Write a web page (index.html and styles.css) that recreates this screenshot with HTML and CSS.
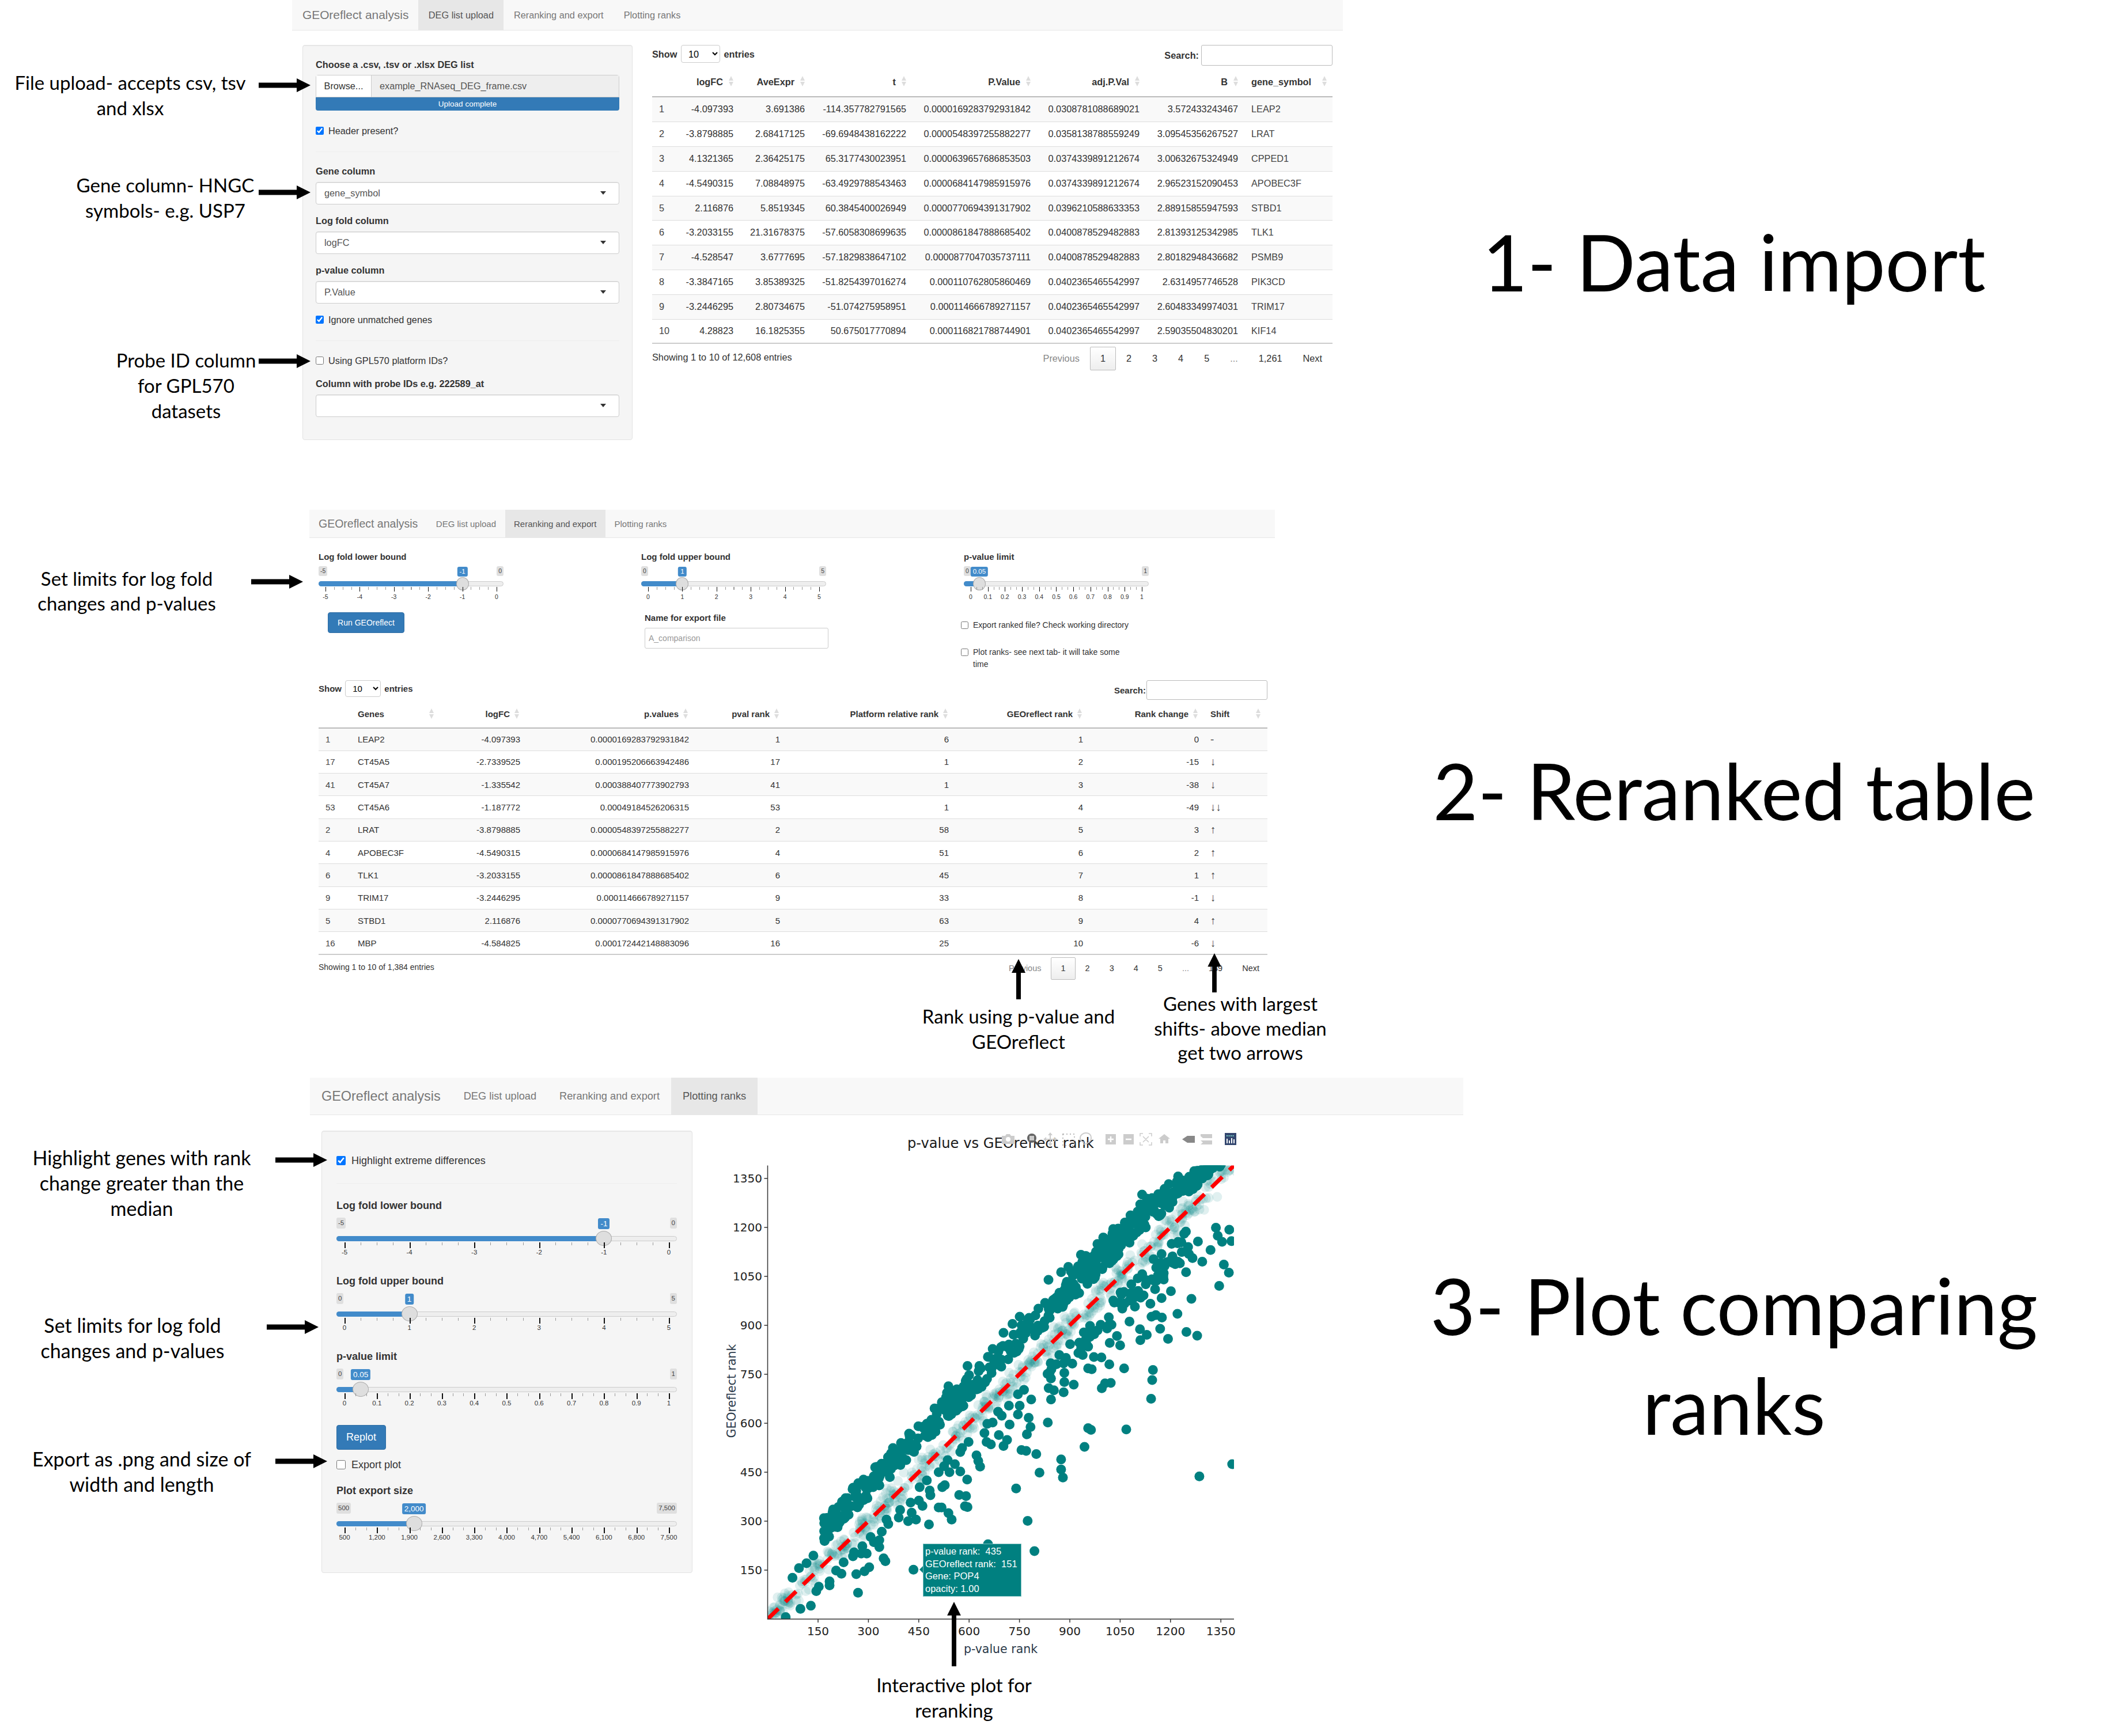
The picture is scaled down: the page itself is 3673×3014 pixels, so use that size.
FILE: index.html
```html
<!DOCTYPE html>
<html lang="en">
<head>
    <meta charset="UTF-8">
    <title>GEOreflect workflow figure</title>
    <link rel="stylesheet" href="styles.css">
</head>
<body>
    <!-- 1: data import -->
    <section class="shot shot-1">
        <nav class="navbar">
            <span class="brand">GEOreflect analysis</span>
            <span class="tab active">DEG list upload</span>
            <span class="tab">Reranking and export</span>
            <span class="tab">Plotting ranks</span>
        </nav>
        <div class="shot-body">
            <aside class="well">
                <div class="field-label">Choose a .csv, .tsv or .xlsx DEG list</div>
                <div class="file-input"><span class="browse">Browse...</span><span class="file-name">example_RNAseq_DEG_frame.csv</span></div>
                <div class="progress">Upload complete</div>
                <label class="check check-first"><input type="checkbox" checked> Header present?</label>
                <hr>
                <div class="field-label">Gene column</div>
                <div class="sel">gene_symbol</div>
                <div class="field-label next">Log fold column</div>
                <div class="sel">logFC</div>
                <div class="field-label next">p-value column</div>
                <div class="sel">P.Value</div>
                <label class="check next"><input type="checkbox" checked> Ignore unmatched genes</label>
                <hr>
                <label class="check"><input type="checkbox"> Using GPL570 platform IDs?</label>
                <div class="field-label next">Column with probe IDs e.g. 222589_at</div>
                <div class="sel"></div>
            </aside>
            <main class="dt-wrap">
                <div class="dt-top">
                    <span class="dt-show">Show <select><option>10</option></select> entries</span>
                    <span class="dt-search">Search: <input type="text"></span>
                </div>
                <table class="dt dt-a">
                    <thead>
                        <tr>
                            <th></th>
                            <th class="num sort">logFC</th>
                            <th class="num sort">AveExpr</th>
                            <th class="num sort">t</th>
                            <th class="num sort">P.Value</th>
                            <th class="num sort">adj.P.Val</th>
                            <th class="num sort">B</th>
                            <th class="sort">gene_symbol</th>
                        </tr>
                    </thead>
                    <tbody>
                        <tr><td>1</td><td class="num">-4.097393</td><td class="num">3.691386</td><td class="num">-114.357782791565</td><td class="num">0.0000169283792931842</td><td class="num">0.0308781088689021</td><td class="num">3.572433243467</td><td>LEAP2</td></tr>
                        <tr><td>2</td><td class="num">-3.8798885</td><td class="num">2.68417125</td><td class="num">-69.6948438162222</td><td class="num">0.0000548397255882277</td><td class="num">0.0358138788559249</td><td class="num">3.09545356267527</td><td>LRAT</td></tr>
                        <tr><td>3</td><td class="num">4.1321365</td><td class="num">2.36425175</td><td class="num">65.3177430023951</td><td class="num">0.0000639657686853503</td><td class="num">0.0374339891212674</td><td class="num">3.00632675324949</td><td>CPPED1</td></tr>
                        <tr><td>4</td><td class="num">-4.5490315</td><td class="num">7.08848975</td><td class="num">-63.4929788543463</td><td class="num">0.0000684147985915976</td><td class="num">0.0374339891212674</td><td class="num">2.96523152090453</td><td>APOBEC3F</td></tr>
                        <tr><td>5</td><td class="num">2.116876</td><td class="num">5.8519345</td><td class="num">60.3845400026949</td><td class="num">0.0000770694391317902</td><td class="num">0.0396210588633353</td><td class="num">2.88915855947593</td><td>STBD1</td></tr>
                        <tr><td>6</td><td class="num">-3.2033155</td><td class="num">21.31678375</td><td class="num">-57.6058308699635</td><td class="num">0.0000861847888685402</td><td class="num">0.0400878529482883</td><td class="num">2.81393125342985</td><td>TLK1</td></tr>
                        <tr><td>7</td><td class="num">-4.528547</td><td class="num">3.6777695</td><td class="num">-57.1829838647102</td><td class="num">0.0000877047035737111</td><td class="num">0.0400878529482883</td><td class="num">2.80182948436682</td><td>PSMB9</td></tr>
                        <tr><td>8</td><td class="num">-3.3847165</td><td class="num">3.85389325</td><td class="num">-51.8254397016274</td><td class="num">0.000110762805860469</td><td class="num">0.0402365465542997</td><td class="num">2.6314957746528</td><td>PIK3CD</td></tr>
                        <tr><td>9</td><td class="num">-3.2446295</td><td class="num">2.80734675</td><td class="num">-51.074275958951</td><td class="num">0.000114666789271157</td><td class="num">0.0402365465542997</td><td class="num">2.60483349974031</td><td>TRIM17</td></tr>
                        <tr><td>10</td><td class="num">4.28823</td><td class="num">16.1825355</td><td class="num">50.675017770894</td><td class="num">0.000116821788744901</td><td class="num">0.0402365465542997</td><td class="num">2.59035504830201</td><td>KIF14</td></tr>
                    </tbody>
                </table>
                <div class="dt-foot">
                    <span class="dt-info">Showing 1 to 10 of 12,608 entries</span>
                    <div class="pager">
                        <span class="page muted">Previous</span><span class="page current">1</span><span class="page">2</span><span class="page">3</span><span class="page">4</span><span class="page">5</span><span class="page muted">...</span><span class="page">1,261</span><span class="page">Next</span>
                    </div>
                </div>
            </main>
        </div>
    </section>

    <!-- 2: reranked table -->
    <section class="shot shot-2">
        <nav class="navbar">
            <span class="brand">GEOreflect analysis</span>
            <span class="tab">DEG list upload</span>
            <span class="tab active">Reranking and export</span>
            <span class="tab">Plotting ranks</span>
        </nav>
        <div class="shot-body">
            <div class="controls">
                <div class="slider">
                    <div class="field-label">Log fold lower bound</div>
                    <div class="irs" style="--f:0.8">
                        <span class="irs-min">-5</span><span class="irs-max">0</span><span class="irs-val">-1</span>
                        <div class="irs-line"><div class="irs-bar"></div></div>
                        <span class="irs-handle"></span>
                        <div class="irs-grid subs-20"><span class="tick"><b>-5</b></span><span class="tick"><b>-4</b></span><span class="tick"><b>-3</b></span><span class="tick"><b>-2</b></span><span class="tick"><b>-1</b></span><span class="tick"><b>0</b></span></div>
                    </div>
                </div>
                <div class="slider">
                    <div class="field-label">Log fold upper bound</div>
                    <div class="irs" style="--f:0.2">
                        <span class="irs-min">0</span><span class="irs-max">5</span><span class="irs-val">1</span>
                        <div class="irs-line"><div class="irs-bar"></div></div>
                        <span class="irs-handle"></span>
                        <div class="irs-grid subs-20"><span class="tick"><b>0</b></span><span class="tick"><b>1</b></span><span class="tick"><b>2</b></span><span class="tick"><b>3</b></span><span class="tick"><b>4</b></span><span class="tick"><b>5</b></span></div>
                    </div>
                </div>
                <div class="slider">
                    <div class="field-label">p-value limit</div>
                    <div class="irs" style="--f:0.05">
                        <span class="irs-min">0</span><span class="irs-max">1</span><span class="irs-val">0.05</span>
                        <div class="irs-line"><div class="irs-bar"></div></div>
                        <span class="irs-handle"></span>
                        <div class="irs-grid subs-30"><span class="tick"><b>0</b></span><span class="tick"><b>0.1</b></span><span class="tick"><b>0.2</b></span><span class="tick"><b>0.3</b></span><span class="tick"><b>0.4</b></span><span class="tick"><b>0.5</b></span><span class="tick"><b>0.6</b></span><span class="tick"><b>0.7</b></span><span class="tick"><b>0.8</b></span><span class="tick"><b>0.9</b></span><span class="tick"><b>1</b></span></div>
                    </div>
                </div>
                <div class="run-cell"><button class="btn">Run GEOreflect</button></div>
                <div class="name-cell">
                    <div class="field-label">Name for export file</div>
                    <input class="text-input" type="text" placeholder="A_comparison">
                </div>
                <div class="check-cell">
                    <label class="check"><input type="checkbox"> <span>Export ranked file? Check working directory</span></label>
                    <label class="check"><input type="checkbox"> <span>Plot ranks- see next tab- it will take some time</span></label>
                </div>
            </div>
            <div class="dt-wrap">
                <div class="dt-top">
                    <span class="dt-show">Show <select><option>10</option></select> entries</span>
                    <span class="dt-search">Search: <input type="text"></span>
                </div>
                <table class="dt dt-b">
                    <thead>
                        <tr>
                            <th></th>
                            <th class="sort">Genes</th>
                            <th class="num sort">logFC</th>
                            <th class="num sort">p.values</th>
                            <th class="num sort">pval rank</th>
                            <th class="num sort">Platform relative rank</th>
                            <th class="num sort">GEOreflect rank</th>
                            <th class="num sort">Rank change</th>
                            <th class="sort">Shift</th>
                        </tr>
                    </thead>
                    <tbody>
                        <tr><td>1</td><td>LEAP2</td><td class="num">-4.097393</td><td class="num">0.0000169283792931842</td><td class="num">1</td><td class="num">6</td><td class="num">1</td><td class="num">0</td><td>-</td></tr>
                        <tr><td>17</td><td>CT45A5</td><td class="num">-2.7339525</td><td class="num">0.000195206663942486</td><td class="num">17</td><td class="num">1</td><td class="num">2</td><td class="num">-15</td><td>↓</td></tr>
                        <tr><td>41</td><td>CT45A7</td><td class="num">-1.335542</td><td class="num">0.000388407773902793</td><td class="num">41</td><td class="num">1</td><td class="num">3</td><td class="num">-38</td><td>↓</td></tr>
                        <tr><td>53</td><td>CT45A6</td><td class="num">-1.187772</td><td class="num">0.00049184526206315</td><td class="num">53</td><td class="num">1</td><td class="num">4</td><td class="num">-49</td><td>↓↓</td></tr>
                        <tr><td>2</td><td>LRAT</td><td class="num">-3.8798885</td><td class="num">0.0000548397255882277</td><td class="num">2</td><td class="num">58</td><td class="num">5</td><td class="num">3</td><td>↑</td></tr>
                        <tr><td>4</td><td>APOBEC3F</td><td class="num">-4.5490315</td><td class="num">0.0000684147985915976</td><td class="num">4</td><td class="num">51</td><td class="num">6</td><td class="num">2</td><td>↑</td></tr>
                        <tr><td>6</td><td>TLK1</td><td class="num">-3.2033155</td><td class="num">0.0000861847888685402</td><td class="num">6</td><td class="num">45</td><td class="num">7</td><td class="num">1</td><td>↑</td></tr>
                        <tr><td>9</td><td>TRIM17</td><td class="num">-3.2446295</td><td class="num">0.000114666789271157</td><td class="num">9</td><td class="num">33</td><td class="num">8</td><td class="num">-1</td><td>↓</td></tr>
                        <tr><td>5</td><td>STBD1</td><td class="num">2.116876</td><td class="num">0.0000770694391317902</td><td class="num">5</td><td class="num">63</td><td class="num">9</td><td class="num">4</td><td>↑</td></tr>
                        <tr><td>16</td><td>MBP</td><td class="num">-4.584825</td><td class="num">0.000172442148883096</td><td class="num">16</td><td class="num">25</td><td class="num">10</td><td class="num">-6</td><td>↓</td></tr>
                    </tbody>
                </table>
                <div class="dt-foot">
                    <span class="dt-info">Showing 1 to 10 of 1,384 entries</span>
                    <div class="pager">
                        <span class="page muted">Previous</span><span class="page current">1</span><span class="page">2</span><span class="page">3</span><span class="page">4</span><span class="page">5</span><span class="page muted">...</span><span class="page">139</span><span class="page">Next</span>
                    </div>
                </div>
            </div>
        </div>
    </section>

    <!-- 3: rank plot -->
    <section class="shot shot-3">
        <nav class="navbar">
            <span class="brand">GEOreflect analysis</span>
            <span class="tab">DEG list upload</span>
            <span class="tab">Reranking and export</span>
            <span class="tab active">Plotting ranks</span>
        </nav>
        <div class="shot-body">
            <aside class="well">
                <label class="check"><input type="checkbox" checked> Highlight extreme differences</label>
                <hr>
                <div class="slider">
                    <div class="field-label">Log fold lower bound</div>
                    <div class="irs" style="--f:0.8">
                        <span class="irs-min">-5</span><span class="irs-max">0</span><span class="irs-val">-1</span>
                        <div class="irs-line"><div class="irs-bar"></div></div>
                        <span class="irs-handle"></span>
                        <div class="irs-grid subs-20"><span class="tick"><b>-5</b></span><span class="tick"><b>-4</b></span><span class="tick"><b>-3</b></span><span class="tick"><b>-2</b></span><span class="tick"><b>-1</b></span><span class="tick"><b>0</b></span></div>
                    </div>
                </div>
                <div class="slider">
                    <div class="field-label">Log fold upper bound</div>
                    <div class="irs" style="--f:0.2">
                        <span class="irs-min">0</span><span class="irs-max">5</span><span class="irs-val">1</span>
                        <div class="irs-line"><div class="irs-bar"></div></div>
                        <span class="irs-handle"></span>
                        <div class="irs-grid subs-20"><span class="tick"><b>0</b></span><span class="tick"><b>1</b></span><span class="tick"><b>2</b></span><span class="tick"><b>3</b></span><span class="tick"><b>4</b></span><span class="tick"><b>5</b></span></div>
                    </div>
                </div>
                <div class="slider">
                    <div class="field-label">p-value limit</div>
                    <div class="irs" style="--f:0.05">
                        <span class="irs-min">0</span><span class="irs-max">1</span><span class="irs-val">0.05</span>
                        <div class="irs-line"><div class="irs-bar"></div></div>
                        <span class="irs-handle"></span>
                        <div class="irs-grid subs-30"><span class="tick"><b>0</b></span><span class="tick"><b>0.1</b></span><span class="tick"><b>0.2</b></span><span class="tick"><b>0.3</b></span><span class="tick"><b>0.4</b></span><span class="tick"><b>0.5</b></span><span class="tick"><b>0.6</b></span><span class="tick"><b>0.7</b></span><span class="tick"><b>0.8</b></span><span class="tick"><b>0.9</b></span><span class="tick"><b>1</b></span></div>
                    </div>
                </div>
                <button class="btn">Replot</button>
                <label class="check export-check"><input type="checkbox"> Export plot</label>
                <div class="slider size-slider">
                    <div class="field-label">Plot export size</div>
                    <div class="irs" style="--f:0.2143">
                        <span class="irs-min">500</span><span class="irs-max">7,500</span><span class="irs-val">2,000</span>
                        <div class="irs-line"><div class="irs-bar"></div></div>
                        <span class="irs-handle"></span>
                        <div class="irs-grid subs-30"><span class="tick"><b>500</b></span><span class="tick"><b>1,200</b></span><span class="tick"><b>1,900</b></span><span class="tick"><b>2,600</b></span><span class="tick"><b>3,300</b></span><span class="tick"><b>4,000</b></span><span class="tick"><b>4,700</b></span><span class="tick"><b>5,400</b></span><span class="tick"><b>6,100</b></span><span class="tick"><b>6,800</b></span><span class="tick"><b>7,500</b></span></div>
                    </div>
                </div>
            </aside>
            <div class="plot">
                <svg class="plot-svg" width="980" height="960" viewBox="0 0 980 960">
                    <defs><clipPath id="plot-area"><rect x="112.5" y="73.500" width="809.500" height="787.500"></rect></clipPath></defs>
                    <g clip-path="url(#plot-area)">
                        <g id="dots-light" fill="#008080" fill-opacity="0.12"></g>
                        <g id="dots-dark" fill="#008080"></g>
                        <path d="M112.5 861L922 73.500" stroke="#ff0000" stroke-width="7" stroke-dasharray="26 17" fill="none"></path>
                    </g>
                    <path d="M112.5 73.500V861H922" stroke="#333" stroke-width="1.5" fill="none"></path>
                    <path id="axis-ticks" stroke="#333" stroke-width="1.5" fill="none"></path>
                    <g class="x-ticks" id="x-ticks"></g>
                    <g class="y-ticks" id="y-ticks"></g>
                    <text class="plot-title" x="355" y="43">p-value vs GEOreflect rank</text>
                    <text class="axis-title" x="517" y="920" text-anchor="middle">p-value rank</text>
                    <text class="axis-title" transform="translate(57 465) rotate(-90)" text-anchor="middle">GEOreflect rank</text>
                    <!-- modebar -->
                    <g class="modebar">
                        <g transform="translate(530 28)" fill="#ccc"><path d="M-11-6h6l2-3h6l2 3h6v14h-22z"/><circle r="4" fill="#fff"/></g>
                        <g transform="translate(572 28)"><circle cx="-1" cy="-2" r="8" fill="#666"/><rect x="-5" y="-6" width="8" height="8" fill="#ccc"/><path d="M4 4l7 6" stroke="#444" stroke-width="3.5"/></g>
                        <g transform="translate(603 28)" fill="#ccc"><path d="M-1-10h2v20h-2zM-10-1h20v2h-20z"/><path d="M0-12l4 5h-8zM0 12l4-5h-8zM-12 0l5-4v8zM12 0l-5-4v8z"/></g>
                        <rect x="625" y="19" width="20" height="20" fill="none" stroke="#bbb" stroke-width="2" stroke-dasharray="2 4"/>
                        <path d="M660 36c6 1 14-3 14-10s-5-9-9-9-10 3-10 9c0 4 3 7 7 7" fill="none" stroke="#ccc" stroke-width="2"/>
                        <g transform="translate(708 28)"><rect x="-9" y="-9" width="18" height="18" fill="#ccc"/><path d="M-5 0h10M0-5v10" stroke="#fff" stroke-width="2.5"/></g>
                        <g transform="translate(739 28)"><rect x="-9" y="-9" width="18" height="18" fill="#ccc"/><path d="M-5 0h10" stroke="#fff" stroke-width="2.5"/></g>
                        <g transform="translate(769 28)" fill="none" stroke="#ccc" stroke-width="1.5"><path d="M-10-5v-5h5M5-10h5v5M10 5v5h-5M-5 10h-5v-5M-5-5l10 10M5-5l-10 10"/></g>
                        <path d="M801 19l-10 8h3v8h5v-5h4v5h5v-8h3z" fill="#ccc"/>
                        <path d="M832 28l9-6h13v12h-13z" fill="#888"/>
                        <path d="M864 19h20v7h-16l-4-3.500zM864 30h20v7h-20l4-3.500z" fill="#ccc"/>
                        <g transform="translate(916 28)"><rect x="-10" y="-11" width="20" height="21" fill="#33476f"/><path d="M-7-6h14" stroke="#7fd8c9" stroke-width="2" stroke-dasharray="2 1.500"/><path d="M-6 7V-1M-2 7V2M2 7V-2M6 7V0" stroke="#fff" stroke-width="2"/></g>
                    </g>
                </svg>
                <div class="hover-box">p-value rank:&nbsp; 435<br>GEOreflect rank:&nbsp; 151<br>Gene: POP4<br>opacity: 1.00</div>
            </div>
        </div>
    </section>

    <!-- annotations on top of the screenshots -->
    <p class="note note-upload">File upload- accepts csv, tsv<br>and xlsx</p>
    <p class="note note-gene">Gene column- HNGC<br>symbols- e.g. USP7</p>
    <p class="note note-probe">Probe ID column<br>for GPL570<br>datasets</p>
    <p class="note note-limits-a">Set limits for log fold<br>changes and p-values</p>
    <p class="note note-rank">Rank using p-value and<br>GEOreflect</p>
    <p class="note note-shifts">Genes with largest<br>shifts- above median<br>get two arrows</p>
    <p class="note note-highlight">Highlight genes with rank<br>change greater than the<br>median</p>
    <p class="note note-limits-b">Set limits for log fold<br>changes and p-values</p>
    <p class="note note-export">Export as .png and size of<br>width and length</p>
    <p class="note note-plot">Interactive plot for<br>reranking</p>

    <svg class="arrow arrow-upload" viewBox="0 0 90 24"><path d="M0 7.500H66V0L90 12 66 24V16.500H0Z"/></svg>
    <svg class="arrow arrow-gene" viewBox="0 0 90 24"><path d="M0 7.500H66V0L90 12 66 24V16.500H0Z"/></svg>
    <svg class="arrow arrow-probe" viewBox="0 0 90 24"><path d="M0 7.500H66V0L90 12 66 24V16.500H0Z"/></svg>
    <svg class="arrow arrow-limits-a" viewBox="0 0 90 24"><path d="M0 7.500H66V0L90 12 66 24V16.500H0Z"/></svg>
    <svg class="arrow arrow-highlight" viewBox="0 0 90 24"><path d="M0 7.500H66V0L90 12 66 24V16.500H0Z"/></svg>
    <svg class="arrow arrow-limits-b" viewBox="0 0 90 24"><path d="M0 7.500H66V0L90 12 66 24V16.500H0Z"/></svg>
    <svg class="arrow arrow-export" viewBox="0 0 90 24"><path d="M0 7.500H66V0L90 12 66 24V16.500H0Z"/></svg>
    <svg class="arrow arrow-rank" viewBox="0 0 24 70"><path d="M8 70V24H0L12 0 24 24H16V70Z"/></svg>
    <svg class="arrow arrow-shift" viewBox="0 0 24 70"><path d="M8 70V24H0L12 0 24 24H16V70Z"/></svg>
    <svg class="arrow arrow-plot" viewBox="0 0 24 113"><path d="M8 113V24H0L12 0 24 24H16V113Z"/></svg>

    <h2 class="step step-1">1- Data import</h2>
    <h2 class="step step-2">2- Reranked table</h2>
    <h2 class="step step-3">3- Plot comparing<br>ranks</h2>

    <script src="plot.js"></script>
</body>
</html>
```

FILE: styles.css
```css
body {
    margin: 0;
    width: 3673px;
    height: 3014px;
    position: relative;
    overflow: hidden;
    background: #fff;
    color: #333;
    font-family: "Liberation Sans", Arial, sans-serif;
}

/* the three app screenshots sit on the figure like windows */
.shot {
    position: absolute;
    box-sizing: border-box;
}
.shot-1 {
    left: 507px;
    top: 0;
    width: 1824px;
    font-size: 16.3px;
    --nav-h: 53px;
    --tab-pad: 17.5px;
}
.shot-2 {
    left: 537px;
    top: 885px;
    width: 1676px;
    font-size: 15px;
    --nav-h: 49px;
    --tab-pad: 15.500px;
}
.shot-3 {
    left: 538px;
    top: 1871px;
    width: 2002px;
    font-size: 18px;
    --nav-h: 65px;
    --tab-pad: 20px;
}

.navbar {
    display: flex;
    align-items: stretch;
    height: var(--nav-h);
    box-sizing: border-box;
    background: #f8f8f8;
    border-bottom: 1px solid #e7e7e7;
    color: #777;
}
.brand, .tab {
    display: flex;
    align-items: center;
}
.brand {
    font-size: 1.28em;
}
.tab {
    padding: 0 var(--tab-pad);
}
.tab.active {
    background: #e7e7e7;
    color: #555;
}
.shot-1 .brand { padding: 0 17px 0 18px; }
.shot-2 .brand { padding: 0 16px; font-size: 19.500px; }
.shot-3 .brand { padding: 0 20px; font-size: 23.400px; }
.shot-3 .tab { font-size: 18.200px; }

.well {
    box-sizing: border-box;
    background: #f5f5f5;
    border: 1px solid #e3e3e3;
    border-radius: 4px;
    box-shadow: inset 0 1px 1px rgba(0,0,0,0.05);
}
hr {
    border: 0;
    border-top: 1px solid #eee;
    margin: 0;
}
.field-label {
    font-weight: bold;
    line-height: 20px;
}

/* ---- shot 1 ---- */
.shot-1 .shot-body {
    display: grid;
    grid-template-columns: 573px 1181px;
    column-gap: 34px;
    padding: 25px 0 0 18px;
}
.shot-1 .well {
    height: 686px;
    padding: 23px 22px 0;
}
.shot-1 .well .field-label { margin-bottom: 9px; }
.shot-1 .well .field-label:first-child { margin-bottom: 8px; }
.shot-1 .well .next { margin-top: 18px; }
.shot-1 .well .check + .field-label.next { margin-top: 20px; }
.shot-1 .well hr { margin: 26px 0 23px; }
.shot-1 .well hr + .check { margin-top: 24px; }
.file-input {
    display: flex;
    height: 39px;
    box-sizing: border-box;
    border: 1px solid #ccc;
    border-radius: 4px 4px 0 0;
    line-height: 37px;
}
.browse {
    width: 95px;
    text-align: center;
    background: #fff;
    border-right: 1px solid #ccc;
}
.file-name {
    flex: 1;
    background: #eee;
    color: #555;
    padding-left: 14px;
}
.progress {
    height: 23px;
    line-height: 23px;
    background: #337ab7;
    color: #fff;
    font-size: 13.500px;
    text-align: center;
    border-radius: 0 0 4px 4px;
}
.check {
    display: flex;
    align-items: flex-start;
    gap: 8px;
    line-height: 20px;
}
.check input {
    margin: 3px 0 0;
    width: 14px;
    height: 14px;
    flex: none;
}
.check-first { margin-top: 25px; }
.sel {
    position: relative;
    height: 39px;
    box-sizing: border-box;
    padding-left: 14px;
    line-height: 37px;
    background: #fff;
    border: 1px solid #ccc;
    border-radius: 4px;
    box-shadow: inset 0 1px 1px rgba(0,0,0,0.075);
    color: #555;
}
.sel::after {
    content: "";
    position: absolute;
    right: 22px;
    top: 15px;
    border: 5px solid transparent;
    border-top: 6px solid #333;
    border-bottom: 0;
}

/* ---- data tables ---- */
.dt-top {
    display: flex;
    justify-content: space-between;
    align-items: flex-start;
    font-weight: bold;
}
.dt-show select {
    font: inherit;
    font-weight: normal;
    background: #fff;
    border: 1px solid #ccc;
    border-radius: 4px;
    padding: 0 0 0 8px;
    margin: 0 2px;
}
.dt-search {
    display: flex;
    align-items: center;
    gap: 4px;
}
.dt-search input {
    box-sizing: border-box;
    border: 1px solid #bbb;
    border-radius: 3px;
    background: #fff;
}
.dt {
    border-collapse: collapse;
    table-layout: fixed;
    width: 100%;
}
.dt th {
    position: relative;
    text-align: left;
    padding: 0 10px;
    border-bottom: 2px solid #bbb;
    box-sizing: border-box;
}
.dt th.num {
    text-align: right;
    padding-right: 28px;
}
.dt td {
    padding: 0 10px;
    border-top: 1px solid #ddd;
    box-sizing: border-box;
    white-space: nowrap;
    overflow: hidden;
}
.dt tbody tr:first-child td { border-top: 0; }
.dt tbody tr:nth-child(odd) { background: #f9f9f9; }
.dt tbody tr:last-child td { border-bottom: 2px solid #ccc; }
.dt .num { text-align: right; }
.dt td:first-child { padding-left: 12px; }
.dt td:first-child, .dt td:last-child { color: #444; }
.sort::before, .sort::after {
    content: "";
    position: absolute;
    right: 10px;
    border: 4px solid transparent;
    top: 50%;
}
.sort::before {
    border-bottom: 8px solid #ddd;
    border-top: 0;
    margin-top: -9px;
}
.sort::after {
    border-top: 8px solid #ddd;
    border-bottom: 0;
    margin-top: 1px;
}
.dt-foot {
    display: flex;
    justify-content: space-between;
    align-items: flex-start;
}
.pager {
    display: flex;
    align-items: stretch;
}
.page {
    display: flex;
    align-items: center;
    box-sizing: border-box;
    border: 1px solid transparent;
    border-radius: 2px;
}
.page.muted { color: #888; }
.page.current {
    border-color: #bbb;
    background: linear-gradient(#fff, #eee);
}

.dt-a th:nth-child(1) { width: 40px; }
.dt-a th:nth-child(2) { width: 111px; }
.dt-a th:nth-child(3) { width: 124px; }
.dt-a th:nth-child(4) { width: 176px; }
.dt-a th:nth-child(5) { width: 216px; }
.dt-a th:nth-child(6) { width: 189px; }
.dt-a th:nth-child(7) { width: 171px; }
.dt-a th { height: 54px; padding-top: 4px; }
.dt-a td { height: 43px; }
.dt-a tbody tr:nth-child(5n) td { height: 42px; }
.dt-a td:last-child, .dt-a th:last-child { padding-left: 13px; }

.shot-1 .dt-top { height: 36px; }
.shot-1 .dt-show { padding-top: 6px; }
.shot-1 .dt-show select { height: 31px; width: 68px; margin-top: -6px; }
.shot-1 .dt-search input { width: 228px; height: 36px; }
.shot-1 .dt-foot { padding-top: 5px; }
.shot-1 .dt-info { padding-top: 9px; }
.shot-1 .page { height: 41px; padding: 0 17px; }

.dt-b th:nth-child(1) { width: 58px; }
.dt-b th:nth-child(2) { width: 154px; }
.dt-b th:nth-child(3) { width: 148px; }
.dt-b th:nth-child(4) { width: 293px; }
.dt-b th:nth-child(5) { width: 158px; }
.dt-b th:nth-child(6) { width: 293px; }
.dt-b th:nth-child(7) { width: 233px; }
.dt-b th:nth-child(8) { width: 201px; }
.dt-b th { height: 49px; }
.dt-b td { height: 39.300px; }
.dt-b td:last-child { font-size: 19px; line-height: 1; }
.dt-b .sort::before, .dt-b .sort::after { right: 12px; }

/* ---- shot 2 ---- */
.shot-2 .shot-body { padding: 23px 13px 0 16px; }
.controls {
    display: grid;
    grid-template-columns: 560px 560px 1fr;
}
.run-cell { padding: 16px 0 0 16px; }
.name-cell { padding: 16px 0 0 6px; }
.name-cell .field-label { margin-bottom: 7px; }
.text-input {
    display: block;
    width: 319px;
    height: 36px;
    box-sizing: border-box;
    border: 1px solid #ccc;
    border-radius: 3px;
    padding: 0 6px;
    font: inherit;
    font-size: 14px;
}
.text-input::placeholder { color: #999; }
.check-cell {
    padding: 28px 0 17px 0;
    margin-left: -5px;
    width: 305px;
}
.shot-2 .check input { width: 13px; height: 13px; margin-top: 4px; }
.check-cell .check { font-size: 14px; line-height: 21px; gap: 8px; }
.check-cell .check + .check { margin-top: 26px; }
.btn {
    display: block;
    background: #337ab7;
    border: 1px solid #2e6da4;
    border-radius: 4px;
    color: #fff;
    font: inherit;
}
.shot-2 .btn { width: 133px; height: 36px; font-size: 14px; padding: 0; }
.shot-2 .dt-top { height: 34px; }
.shot-2 .dt-show { padding-top: 6px; }
.shot-2 .dt-show select { height: 29px; width: 62px; margin-top: -6px; }
.shot-2 .dt-search input { width: 210px; height: 34px; }
.shot-2 .dt-search { gap: 1px; }
.shot-2 .dt-foot { padding-top: 4px; margin-right: -3px; }
.shot-2 .dt-info { padding-top: 9px; font-size: 14px; }
.shot-2 .page { height: 39px; padding: 0 16px; font-size: 14.500px; }

/* ---- range sliders ---- */
.shot-2 .slider {
    width: 321px;
    --inset: 12px;
    --pill-top: 6px;
    --pill-h: 17px;
    --track-top: 32px;
    --handle-w: 22px;
    --handle-h: 23px;
    --handle-top: 25px;
    --grid-top: 42px;
    --major-w: 1px;
    --major-h: 8px;
    --label-top: 11px;
    --irs-h: 70px;
    --small: 10.500px;
    --val-size: 11.500px;
}
.shot-3 .slider {
    --inset: 14px;
    --pill-top: 11px;
    --pill-h: 19px;
    --track-top: 43px;
    --handle-w: 28px;
    --handle-h: 26px;
    --handle-top: 34px;
    --grid-top: 54px;
    --major-w: 2px;
    --major-h: 10px;
    --label-top: 11px;
    --irs-h: 111px;
    --small: 11.500px;
    --val-size: 13.500px;
}
.irs {
    position: relative;
    height: var(--irs-h);
    --pos: calc(var(--inset) + var(--f) * (100% - 2 * var(--inset)));
}
.irs-min, .irs-max, .irs-val {
    position: absolute;
    top: var(--pill-top);
    height: var(--pill-h);
    line-height: var(--pill-h);
    padding: 0 3px;
    border-radius: 3px;
    background: #dfdfdf;
    color: #444;
    font-size: var(--small);
}
.irs-min { left: 0; }
.irs-max { right: 0; }
.irs-val {
    left: var(--pos);
    transform: translateX(-50%);
    background: #428bca;
    color: #fff;
    font-size: var(--val-size);
    padding: 0 4px;
    margin-top: 1px;
}
.irs-line {
    position: absolute;
    left: 0;
    right: 0;
    top: var(--track-top);
    height: 9px;
    box-sizing: border-box;
    background: #eee;
    border: 1px solid #ccc;
    border-radius: 5px;
}
.irs-bar {
    position: absolute;
    left: -1px;
    top: -1px;
    bottom: -1px;
    width: var(--pos);
    background: #428bca;
    border-radius: 5px 0 0 5px;
}
.irs-handle {
    position: absolute;
    top: var(--handle-top);
    left: var(--pos);
    width: var(--handle-w);
    height: var(--handle-h);
    box-sizing: border-box;
    transform: translateX(-50%);
    background: #dedede;
    border: 1px solid #ababab;
    border-radius: 50%;
}
.irs-grid {
    position: absolute;
    top: var(--grid-top);
    left: 0;
    right: 0;
    padding: 0 var(--inset);
    height: 30px;
    display: flex;
    justify-content: space-between;
    background-origin: content-box;
    background-clip: content-box;
    background-size: 100% 5px;
    background-repeat: no-repeat;
}
.subs-20 { background-image: repeating-linear-gradient(to right, #999 0 1px, transparent 1px 5%); }
.subs-30 { background-image: repeating-linear-gradient(to right, #999 0 1px, transparent 1px 3.3333%); }
.tick {
    position: relative;
    width: 0;
}
.tick::before {
    content: "";
    position: absolute;
    left: 0;
    top: 0;
    width: var(--major-w);
    height: var(--major-h);
    background: #111;
}
.tick b {
    position: absolute;
    left: 0;
    top: var(--label-top);
    transform: translateX(-50%);
    font-weight: normal;
    font-size: var(--small);
    color: #333;
    white-space: nowrap;
}

/* ---- shot 3 ---- */
.shot-3 .shot-body {
    display: flex;
    align-items: flex-start;
    padding-left: 20px;
}
.shot-3 .well {
    width: 644px;
    height: 768px;
    margin-top: 27px;
    padding: 41px 26px 0 25px;
    flex: none;
}
.shot-3 .check input { width: 16px; height: 16px; margin-top: 2px; }
.shot-3 .check { gap: 10px; }
.shot-3 .well hr { margin: 29px 0 28px; }
.shot-3 .slider { height: 131px; }
.shot-3 .btn {
    width: 86px;
    height: 43px;
    margin-top: -2px;
}
.export-check { margin-top: 16px; }
.size-slider { margin-top: 25px; }

.plot {
    position: relative;
    width: 980px;
    height: 960px;
    margin: 14px 0 0 18px;
    flex: none;
}
.plot-svg {
    display: block;
    font-family: "DejaVu Sans", sans-serif;
    fill: #222;
}
.plot-title { font-size: 24.200px; fill: #1a1a1a; }
.axis-title { font-size: 20.500px; fill: #2b3a4a; }
.x-ticks text { font-size: 20px; text-anchor: middle; }
.y-ticks text { font-size: 20px; text-anchor: end; }
.hover-box {
    position: absolute;
    left: 382px;
    top: 730px;
    width: 171px;
    height: 92px;
    box-sizing: border-box;
    padding: 2px 3px;
    background: #008080;
    border: 1px solid #7fbfbf;
    color: #fff;
    font-size: 16.500px;
    line-height: 21.500px;
    white-space: nowrap;
}
.hover-box::before {
    content: "";
    position: absolute;
    left: -7px;
    top: 38px;
    border: 6px solid transparent;
    border-left: 0;
    border-right: 6px solid #008080;
}

/* ---- figure annotations ---- */
.note {
    position: absolute;
    margin: -2px 0 0;
    transform: translateX(-50%);
    text-align: center;
    white-space: nowrap;
    font-family: Lato, "Noto Sans", sans-serif;
    font-size: 33px;
    line-height: 44px;
    color: #000;
}
.note-upload { left: 226px; top: 123px; }
.note-gene { left: 287px; top: 301px; }
.note-probe { left: 323px; top: 605px; }
.note-limits-a { left: 220px; top: 985px; line-height: 43px; }
.note-rank { left: 1768px; top: 1744px; }
.note-shifts { left: 2153px; top: 1723px; line-height: 42.500px; }
.note-highlight { left: 246px; top: 1990px; font-size: 34px; }
.note-limits-b { left: 230px; top: 2281px; font-size: 34px; }
.note-export { left: 246px; top: 2513px; font-size: 34px; }
.note-plot { left: 1656px; top: 2905px; }

.arrow {
    position: absolute;
    display: block;
    fill: #000;
}
.arrow-upload, .arrow-gene, .arrow-probe, .arrow-limits-a, .arrow-highlight, .arrow-limits-b, .arrow-export {
    width: 90px;
    height: 24px;
}
.arrow-upload { left: 449px; top: 136px; }
.arrow-gene { left: 449px; top: 322px; }
.arrow-probe { left: 449px; top: 615px; }
.arrow-limits-a { left: 436px; top: 998px; }
.arrow-highlight { left: 478px; top: 2002px; }
.arrow-limits-b { left: 463px; top: 2292px; }
.arrow-export { left: 478px; top: 2525px; }
.arrow-rank { left: 1756px; top: 1665px; width: 24px; height: 70px; }
.arrow-shift { left: 2096px; top: 1655px; width: 24px; height: 68px; }
.arrow-plot { left: 1644px; top: 2781px; width: 24px; height: 112px; }

.step {
    position: absolute;
    left: 2400px;
    width: 1220px;
    margin: 0;
    text-align: center;
    font-family: Lato, "Noto Sans", sans-serif;
    font-weight: normal;
    font-size: 135px;
    line-height: 173px;
    color: #000;
}
.step-1 { top: 368px; }
.step-2 { top: 1286px; }
.step-3 { top: 2180px; }
```

FILE: plot.js
```js
// Scatter of p-value rank against GEOreflect rank.
// Coordinates below are read off the figure: chartX = x / 1.6, chartY = y / 1.425 - 50
const NS = 'http://www.w3.org/2000/svg';
const toX = X => X / 1.6;
const toY = Y => Y / 1.425 - 50;

const outliers = [
    [1470,915],[1379,945],[902,1055],[921,1130],[870,975],[935,936],[1000,948],[995,903],[995,928],[926,890],[898,882],[885,880],
    [1060,872],[1070,826],[1078,830],[1176,829],[958,812],[1245,753],[1248,707],[1250,682],[1170,678],[1108,727],[1133,714],[1117,715],
    [1030,718],[1004,689],[1004,712],[1002,737],[975,732],[967,755],[912,755],[892,731],[875,742],[1080,680],[1070,678],[1026,666],
    [990,645],[966,665],[968,680],[1373,597],[1343,588],[1292,605],[1318,543],[1357,506],[1300,487],[1434,474],[1461,441],[1447,421],
    [1387,414],[1342,440],[1410,385],[1375,364],[1462,335],[1468,363],[1442,365],[1430,350],[1425,330],[1220,248],[1215,608],[1233,595],
    [1214,581],[1185,562],[1270,580],[1275,552],[1258,546],[1246,550],[1243,518],[1274,504],[1256,482],[1250,460],[1280,442],[1280,458],
    [1260,461],[1312,420],[1325,418],[1330,390],[1350,395],[1360,405],[1274,395],[1252,408],[1302,370],[1320,365],[1150,598],[1159,621],
    [1130,615],[1129,668],[1107,651],[1086,650],[1105,570],[1135,570],[1058,589],[1075,600],[1070,624],[1020,618],[1043,640],[1055,645],
    [431,1233],[300,1265],[271,1273],[230,1293],[315,1229],[322,1218],[352,1215],[352,1205],[370,1178],[385,1186],[391,1158],[426,1187],
    [449,1180],[462,1170],[507,1155],[502,1148],[585,1176],[628,1064],[570,1056],[592,1052],[544,1047],[515,1063],[510,1052],[497,1082],
    [466,1095],[475,1108],[490,1103],[490,1120],[443,1118],[455,1136],[440,1136],[420,1133],[417,1143],[691,1052],[682,1036],[663,1022],
    [655,1022],[610,1018],[577,1010],[600,1005],[548,1028],[580,1035],[735,1021],[728,1019],[731,994],[712,991],[630,980],[632,992],
    [602,972],[622,955],[665,972],[672,967],[734,953],[715,933],[770,921],[765,907],[760,893],[680,905],[670,920],[655,935],
    [685,935],[700,915],[715,885],[738,860],[720,875],[845,855],[835,870],[822,843],[800,866],[788,860],[782,838],[790,815],
    [805,812],[852,817],[830,795],[820,785],[850,770],[880,770],[875,792],[905,800],[910,823],[900,841],[792,1113],
    [1140,510],[1165,530],[1185,510],[1200,525],[1160,490],[1190,470],[1215,495],[1230,470],
    // above the diagonal
    [307,1141],[288,1160],[267,1172],[249,1196],[682,722],[678,738],[735,672],[768,672],[805,630],[835,590],[860,568],[880,550],
    [905,555],[932,530],[960,459],[1112,354],[1172,317],[1320,203],[1294,222],[1150,345],[1050,397],[1015,427],[995,440],[660,775],
    [528,875],[570,880],[430,995],[405,1040],[360,1070],[338,1105],[613,822],[635,805],[1265,260],[1245,268]
];

let seed = 20817;
function rand() {
    seed = (seed * 16807) % 2147483647;
    return seed / 2147483647;
}

function diagonalY(X) {
    return 1298 - (X - 180) * 0.8664;
}

function addDot(group, X, Y) {
    const dot = document.createElementNS(NS, 'circle');
    dot.setAttribute('cx', toX(X).toFixed(1));
    dot.setAttribute('cy', toY(Y).toFixed(1));
    dot.setAttribute('r', '8.5');
    group.appendChild(dot);
}

const light = document.getElementById('dots-light');
for (let i = 0; i < 560; i++) {
    const X = 180 + 1300 * rand();
    const spread = (rand() + rand() - 1) * 40;
    addDot(light, X, diagonalY(X) + spread);
}

const dark = document.getElementById('dots-dark');
for (let i = 0; i < 480; i++) {
    const X = 336 + 1140 * rand();
    let offset = 56 + 64 * rand();
    if (X > 1250) offset *= 1 - (X - 1250) / 220 * 0.6;
    addDot(dark, X, diagonalY(X) - offset);
}
// thicker stretch of the upper band
for (let i = 0; i < 60; i++) {
    const X = 1000 + 250 * rand();
    addDot(dark, X, diagonalY(X) - 70 - 65 * rand());
}
// second, looser cloud under the line at the high ranks
for (let i = 0; i < 50; i++) {
    const X = 950 + 400 * rand();
    addDot(dark, X, diagonalY(X) + 45 + 60 * rand());
}
outliers.forEach(p => addDot(dark, p[0], p[1]));

// axis ticks and labels
let ticks = '';
const xTicks = document.getElementById('x-ticks');
const yTicks = document.getElementById('y-ticks');
for (let n = 1; n <= 9; n++) {
    const value = n * 150;
    const x = 200 + (n - 1) * 87.4;
    const y = 776 - (n - 1) * 85;
    ticks += `M${x} 861v6M112.5 ${y}h-6`;

    const xLabel = document.createElementNS(NS, 'text');
    xLabel.setAttribute('x', x);
    xLabel.setAttribute('y', 889);
    xLabel.textContent = value;
    xTicks.appendChild(xLabel);

    const yLabel = document.createElementNS(NS, 'text');
    yLabel.setAttribute('x', 103);
    yLabel.setAttribute('y', y + 7);
    yLabel.textContent = value;
    yTicks.appendChild(yLabel);
}
document.getElementById('axis-ticks').setAttribute('d', ticks);
```
